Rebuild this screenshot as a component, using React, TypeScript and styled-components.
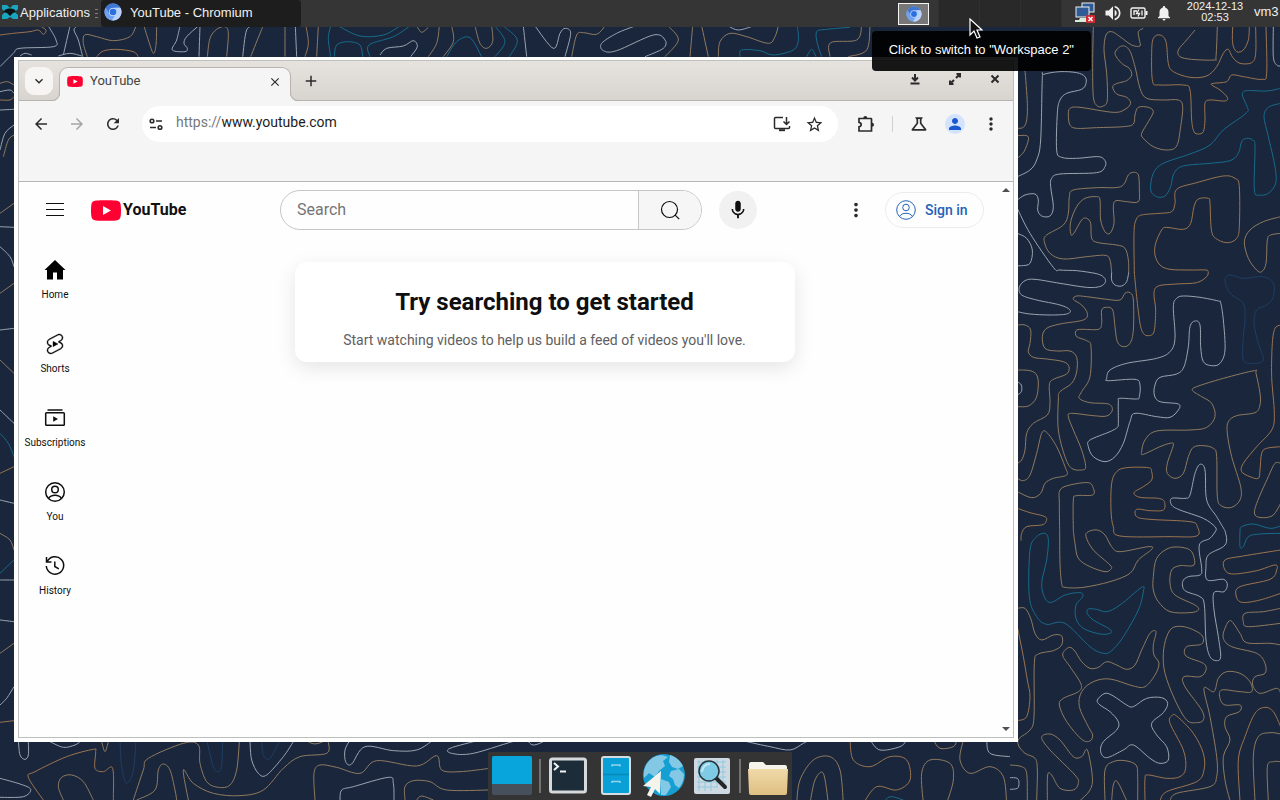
import React from "react";
import styled, { createGlobalStyle } from "styled-components";
import {
  MdAdd, MdArrowBack, MdArrowForward, MdClose, MdExpandMore, MdMic, MdMoreVert,
  MdNotifications, MdOutlineScience, MdPerson, MdRefresh, MdStarBorder, MdVolumeUp,
} from "react-icons/md";

const GlobalStyle = createGlobalStyle`
  *, *::before, *::after { box-sizing: border-box; }
  body { margin: 0; font-family: "Liberation Sans", Arial, sans-serif; background: #1a263b; }
  button, input { font: inherit; color: inherit; border: 0; padding: 0; background: none; }
  button { cursor: default; }
  input { outline: 0; min-width: 0; }
  svg { display: block; flex: none; }
`;

/* ---------- wallpaper ---------- */

type Line = [tone: string, points: string, closed?: boolean];
interface Patch { x: number; y: number; lines: Line[]; }

const tones: Record<string, string> = { w: "#9aa5b1", t: "#8e7a60", o: "#9b7450", b: "#176a8c", d: "#1d3e63" };

const patches: Patch[] = [
  { x: 1010, y: 20, lines: [
    ["t", "250,20 248,130 250,230 262,258 280,258 292,240 290,160 282,90 288,45 305,35 330,50 365,75 390,78 388,60 385,35 400,25"],
    ["t", "315,100 335,78 358,90 375,140 390,205 410,235 460,240 505,240 518,260 512,320 500,378 470,390 430,380 400,355 395,340 415,305 430,275 415,262 385,262 375,285 370,312 340,320 260,323 200,325 180,315 175,285 180,265 210,262 310,277 345,268 362,250 350,232 320,222 308,200 322,190 350,182 365,165 358,145 335,130", true],
    ["o", "737,20 737,100 725,128 690,130 668,112 655,88 640,100 620,140 590,168 540,172 490,155 475,130 468,65 450,45 430,55 425,100 428,185 450,195 520,195 540,210 545,300 552,335 565,342 580,335 585,300 585,250 600,240 645,243 652,232 630,210 605,195 610,190 650,185 665,165 700,170 755,178 770,160 768,20"],
    ["t", "555,30 530,60 505,90 510,110 545,118 612,120 618,110 622,20"],
    ["o", "668,20 668,70 680,95 700,90 715,60 718,20"],
    ["w", "790,20 790,110 800,135 812,138"],
    ["b", "812,205 770,213 710,212 697,225 712,262 708,280 640,330 600,375 540,402 460,430 430,460 422,510 440,530 465,528 482,500 492,460 520,438 600,430 660,422 685,400 695,365 710,355 728,360 735,380 733,510 748,525 775,520 797,490 795,440 775,350 762,290 775,262 812,250"],
    ["w", "22,470 60,450 80,420 92,360 97,175 102,163 150,155 200,158 225,170 228,190 215,208 170,220 150,240 142,280 140,390 155,412 200,415 265,410 285,422 285,440 260,458 150,462 125,475 122,500 130,560 120,588 95,588 83,570 85,540 75,522 45,525 22,540"],
    ["t", "45,150 52,250 50,300 40,322 22,325"],
    ["t", "22,347 50,347 55,360 42,395 22,415"],
    ["t", "356,760 355,720 345,685 320,675 265,668 245,655 242,610 230,595 215,600 190,642 182,640 182,605 200,560 225,535 260,530 270,540 272,600 285,635 300,640 312,610 310,560 318,542 350,545 385,545 388,510 385,465 370,457 355,465 332,500 260,503 190,510 178,530 175,580 160,615 110,645 103,665 120,700 160,717 230,710 285,706 300,720 305,760"],
    ["w", "22,565 60,640 130,742 150,750 200,752 255,760 276,767"],
    ["o", "373,760 372,640 378,600 395,585 450,580 485,575 495,550 500,508 560,488 640,468 675,475 688,500 688,620 680,655 655,668 625,660 605,635 600,550 595,535 565,537 552,560 542,610 520,628 470,622 455,630 437,670 435,705 450,735 480,748 540,750 588,750 595,756"],
    ["t", "812,590 760,605 720,630 703,665 715,715 740,750 755,755 768,730 772,660 782,645 812,640"],
    ["w", "22,640 50,655 67,690 60,730 35,737 22,737"],
  ]},
  { x: 1010, y: 270, lines: [
    ["w", "276,17 286,28 284,40 268,50 230,52 150,40 75,28 45,32 28,52 35,75 80,90 150,105 180,120 170,132 120,135 60,132 22,125"],
    ["w", "305,8 305,30 315,45 335,48 350,35 356,8"],
    ["o", "373,8 380,80 390,160 400,190 415,197 432,185 437,120 432,70 445,48 500,42 560,38 590,20 595,6"],
    ["t", "22,165 45,165 62,180 60,220 55,245 70,262 110,267 160,275 177,290 170,312 130,328 118,345 120,400 112,435 70,460 50,490 45,540 35,570 22,580"],
    ["t", "200,78 190,88 215,105 232,130 220,150 150,162 110,175 97,200 105,235 140,243 180,243 200,262 200,305 185,340 150,365 145,390 145,480 165,560 185,595 215,600 227,590 215,540 190,480 175,440 185,430 250,437 290,438 307,420 295,402 240,398 208,385 215,365 240,320 243,230 230,212 200,200 198,182 215,178 265,178 275,160 275,120 290,112 308,120 315,170 322,215 340,230 360,220 370,180 370,90 360,68 345,70 330,90 290,88 230,80", true],
    ["w", "490,110 500,85 520,78 570,82 625,93 632,98 640,150 645,240 630,280 605,287 580,275 572,230 570,165 555,153 540,170 535,230 522,290 500,312 450,322 435,345 433,375 450,395 505,402 505,420 480,442 440,440 375,430 360,455 340,520 315,560 285,575 250,560 235,530 240,510 300,485 322,472 325,460 325,395 330,385 380,387 388,380 390,345 375,328 295,332 290,325 300,300 350,280 440,265 480,245 495,205", true],
    ["t", "733,302 738,310 750,370 750,405 735,428 680,437 655,455 652,490 665,560 692,650 690,690 665,712 635,708 622,680 620,560 610,535 580,527 550,532 535,560 520,610 495,625 472,610 472,580 490,525 480,520 450,530 400,553 395,545 405,510 440,483 540,480 590,472 615,440 605,400 575,380 548,362 560,350 640,325", true],
    ["d", "645,30 660,15 700,25 760,20 790,40 790,80 770,105 740,120 732,160 745,220 760,270 730,280 700,270 700,200 705,150 700,100 660,70", true],
    ["o", "812,165 795,175 787,220 785,320 793,430 785,480 740,530 700,580 695,605 720,620 745,625 750,600 755,550 770,535 812,530"],
    ["t", "812,580 795,580 775,620 740,700 735,735 760,743 790,735 812,700"],
    ["t", "22,625 40,632 60,615 80,550 95,490 110,487 140,530 165,590 170,615 130,625 105,640 92,670 65,683 22,665"],
    ["o", "305,640 320,605 350,593 415,593 425,605 425,630 400,650 372,668 390,682 445,685 463,695 460,720 420,722 380,718 380,740 420,748 540,755 562,770 560,798 480,800 330,798 310,770 303,720", true],
    ["w", "645,782 620,740 590,690 585,600 570,583 555,610 540,675 525,685 485,685 485,705 510,720 580,745 615,770 618,782"],
    ["t", "149,782 148,700 150,660 180,645 235,638 250,655 248,675 200,677 190,690 190,782"],
    ["t", "22,300 60,302 80,315 85,345 78,385 55,408 22,410"],
    ["w", "22,335 34,345 34,365 22,375"],
    ["o", "22,715 60,728 105,740 108,755 95,765 50,770 35,790 33,812"],
    ["b", "690,782 695,770 730,762 780,775 812,768"],
  ]},
  { x: 1010, y: 530, lines: [
    ["b", "60,60 80,20 105,10 115,30 110,90 95,160 105,205 125,217 165,195 210,188 218,200 198,225 198,265 220,295 270,312 300,310 300,298 250,270 232,250 235,237 260,238 290,245 330,225 395,172 400,185 385,240 340,320 305,362 280,370 240,350 165,280 110,283 80,260 58,200", true],
    ["t", "149,2 150,100 155,160 165,172 220,172 300,155 360,130 385,90 425,58 415,50 330,65 305,50 285,15 262,0 235,5 228,20 250,60 300,105 302,118 285,125 240,110 205,85 195,40 190,2"],
    ["t", "430,140 440,85 475,55 515,52 545,65 552,105 510,107 485,120 480,160 495,195 555,225 565,240 540,248 480,245 445,215 430,180", true],
    ["w", "645,2 650,30 640,50 595,75 588,110 592,150 640,148 652,165 642,185 612,188 612,240 625,320 632,380 620,392 600,380 588,330 583,225 570,200 525,182 518,155 535,140 570,135 575,115 568,45 600,25 618,2"],
    ["b", "690,2 690,50 700,50 715,20 750,12 812,10"],
    ["o", "812,60 700,78 645,90 645,120 670,132 740,122 795,105 800,120 780,148 690,170 678,195 695,217 750,210 812,190"],
    ["t", "812,235 760,245 705,250 700,275 715,290 812,280"],
    ["t", "812,345 780,340 710,338 690,310 662,272 645,295 640,325 665,350 740,370 765,400 765,430 735,440 728,465 750,490 800,475 812,490"],
    ["t", "470,320 490,292 530,292 575,315 575,342 530,350 528,378 580,400 588,420 570,440 522,440 525,470 575,540 580,570 560,578 530,570 495,510 465,430 460,370", true],
    ["t", "158,375 175,353 192,360 215,395 240,415 265,412 290,395 320,405 350,418 375,405 395,360 420,310 438,305 430,345 432,375 447,400 435,435 405,470 370,468 300,447 250,455 215,485 208,530 235,590 248,615 240,633 215,628 170,575 148,525 160,505 205,485 213,462 180,410", true],
    ["w", "262,510 285,490 310,498 350,525 370,530 410,505 455,503 473,520 460,548 425,580 440,615 470,650 475,690 450,700 420,685 370,645 340,660 290,683 272,665 280,635 320,600 325,575 300,545 270,525", true],
    ["t", "22,235 45,235 62,265 75,310 95,330 130,315 155,318 155,345 130,362 85,372 73,400 72,560 60,600 28,625 25,645 45,670 75,685 82,720 80,812"],
    ["o", "22,290 40,380 52,450 60,500 50,560 22,572"],
    ["t", "210,812 240,780 247,740 232,660 215,680 190,680 150,630 120,612 95,622 120,660 195,735 205,760 190,780 150,775 125,735 113,735 112,812"],
    ["t", "285,812 285,720 310,695 345,692 378,705 383,740 383,812"],
    ["t", "305,812 310,765 322,755 350,812"],
    ["o", "405,812 405,745 415,735 470,745 510,740 527,715 520,660 480,580 485,558 500,558 550,610 580,670 582,720 560,755 470,785 450,812"],
    ["t", "660,812 645,750 640,680 660,630 645,590 650,560 688,545 690,525 645,525 630,505 635,480 690,485 725,485 720,455 690,430 650,425 625,445 612,485 582,475 600,560 620,680 620,740 600,770 500,790 480,812"],
    ["o", "690,812 685,690 705,620 735,550 765,532 790,545 812,590"],
    ["t", "735,812 730,680 745,620 780,608 812,612"],
    ["t", "775,812 772,710 790,695 812,695"],
    ["t", "0,705 35,710 50,730 52,812"],
    ["w", "0,743 22,745 27,760 22,775 0,778"],
  ]},
  { x: 0, y: 690, lines: [
    ["w", "55,150 60,195 75,208 85,195 85,155"],
    ["w", "150,155 190,172 225,165 240,155"],
    ["o", "130,330 85,262 105,245 200,200 280,178 287,185 285,235 310,245 338,235 340,330"],
    ["t", "190,330 175,290 185,262 215,255 250,275 280,330"],
    ["w", "0,265 60,282 92,298 70,320 0,322"],
    ["t", "400,330 430,240 445,205 550,160 595,165 600,220 620,275 655,292 690,285 710,240 718,155"],
    ["d", "360,150 365,230 380,280 400,240 408,150"],
    ["d", "620,150 640,230 655,245 665,225 668,150"],
    ["d", "785,150 790,195 810,205 840,150"],
    ["t", "410,330 465,300 475,240 490,222 510,240 525,300 530,330"],
    ["t", "565,330 550,240 580,280 640,310 720,317 790,300 850,235 900,200 980,190 985,155"],
    ["w", "750,155 755,210 775,250 800,255 850,200 880,155"],
    ["t", "915,150 945,162 980,150"],
    ["w", "1050,150 1035,180 1037,215 1055,222 1095,170 1180,182 1250,180 1300,150"],
    ["t", "945,330 942,250 960,225 1010,232 1080,250 1130,212 1250,228 1310,197 1325,240 1380,245 1470,235"],
    ["w", "1020,330 1025,300 1060,290 1165,262 1180,280 1182,330"],
    ["t", "1215,330 1215,290 1240,272 1290,275 1340,300 1470,300"],
    ["t", "1250,330 1265,318 1300,330"],
    ["w", "1440,150 1350,175 1355,190 1420,190 1560,150 1600,165 1640,150"],
    ["t", "305,155 315,185 325,155"],
    ["w", "0,45 20,25 42,-10"],
    ["o", "0,97 42,92"],
  ]},
  { x: 0, y: 0, lines: [
    ["o", "0,105 40,100 90,95 115,90 130,103 138,90 115,75"],
    ["w", "0,200 40,160 60,145 160,140 168,120 145,78"],
    ["w", "190,165 210,78"], ["w", "232,78 222,90 235,120 248,170"],
    ["t", "262,170 250,130 255,104 290,110 340,122 390,110 408,78"],
    ["o", "290,170 310,153 350,148 400,155 415,170"],
    ["t", "432,78 445,120 460,160 468,135 470,78"],
    ["w", "540,78 530,120 517,150 555,155 562,145 552,130 560,110 595,78"],
    ["w", "597,170 600,78"], ["t", "622,170 630,115 650,88 675,80 685,100 680,170"],
    ["w", "728,170 740,90 765,78"], ["t", "752,170 785,88 790,78"],
    ["t", "855,170 855,78"], ["w", "890,170 886,78"], ["o", "915,170 925,130 918,78"], ["t", "955,78 950,170"],
    ["b", "992,78 985,115 992,170"], ["b", "1003,170 1010,135 1045,125 1080,135 1088,170"],
    ["b", "1015,78 1080,108 1150,105 1200,78"], ["b", "1110,170 1107,135 1180,110 1230,78"],
    ["t", "0,250 22,245 42,255"], ["w", "0,275 30,270 42,280"], ["o", "0,300 30,300 42,290"], ["w", "0,330 42,328"],
    ["w", "0,450 15,400 42,375"], ["t", "10,470 25,420 42,405"], ["t", "0,640 42,610"], ["w", "0,680 42,682"],
    ["w", "0,740 30,770 42,800"], ["t", "0,880 42,850"], ["w", "0,990 42,985"], ["t", "0,1080 42,1120"],
    ["w", "0,1230 42,1270"], ["b", "0,1300 25,1330 42,1370"], ["o", "0,1420 42,1400"], ["w", "0,1500 42,1510"],
    ["t", "0,1600 30,1620 42,1650"], ["b", "0,1720 42,1680"], ["w", "0,1740 42,1740"], ["w", "0,1860 42,1865"],
    ["t", "0,1960 42,1930"],
    ["w", "60,168 75,160 95,165"], ["w", "175,168 210,160 245,168"],
  ]},
  { x: 380, y: 0, lines: [
    ["w", "0,165 20,145 70,138 100,122 112,140 92,170"], ["t", "110,78 125,97 145,82"],
    ["t", "145,170 170,130 178,78"], ["t", "190,170 220,125 215,78"],
    ["b", "200,170 230,125 270,113 305,170"], ["b", "345,78 375,125 345,170"], ["b", "370,78 412,120 388,170"],
    ["t", "285,78 300,130 320,145 338,125 335,78"], ["w", "430,78 440,170"],
    ["w", "465,78 520,145 540,100 555,85 572,100 555,170"], ["t", "575,170 590,105 610,98 650,103 675,78"],
    ["w", "765,78 710,100 665,130 670,152 710,152 820,105 855,120 850,145 795,170"],
    ["t", "865,78 895,120 855,170"], ["t", "938,78 930,170"], ["t", "965,78 985,170"],
    ["t", "1015,170 1020,125 1050,100 1100,110 1165,130 1185,110 1195,78"], ["w", "1045,78 1075,90 1120,78"],
    ["b", "1080,170 1085,150 1140,152 1180,165 1240,150 1255,120 1252,78"],
    ["b", "1325,170 1312,130 1310,95 1340,88 1410,82"], ["b", "1280,170 1295,148 1308,170"],
    ["t", "1350,170 1352,128 1430,120 1445,78"], ["t", "1405,170 1460,150 1470,78"],
  ]},
  { x: 790, y: 740, lines: [
    ["w", "-130,5 -60,20 0,30 40,10 60,0"], ["t", "20,190 30,120 70,60 120,50 150,90 160,190"],
    ["t", "60,190 75,120 100,100 115,190"], ["o", "180,0 190,60 240,80 300,50 350,60 360,120 320,150 260,140 220,190"],
    ["w", "240,0 270,30 330,20 350,0"], ["t", "400,190 395,100 420,60 480,70 490,120 470,190"],
    ["t", "520,0 510,60 540,100 600,80 640,110 650,190"], ["t", "430,0 450,25 490,20 500,0"],
    ["w", "590,0 600,40 660,50"], ["b", "280,190 300,170 340,180"],
  ]},
];

function smoothPath(points: string, closed = false) {
  const p = points.split(" ").map((pair) => pair.split(",").map(Number));
  const n = p.length;
  const at = (i: number) => (closed ? p[(i + n) % n] : p[Math.max(0, Math.min(n - 1, i))]);
  let d = `M${p[0]}`;
  for (let i = 0; i < (closed ? n : n - 1); i++) {
    const [a, b, c, e] = [at(i - 1), at(i), at(i + 1), at(i + 2)];
    d += `C${b[0] + (c[0] - a[0]) / 6},${b[1] + (c[1] - a[1]) / 6} ${c[0] - (e[0] - b[0]) / 6},${c[1] - (e[1] - b[1]) / 6} ${c[0]},${c[1]}`;
  }
  return closed ? d + "Z" : d;
}

const WallpaperSvg = styled.svg`
  position: absolute;
  inset: 0;
  z-index: -1;
  width: 100%;
  height: 100%;
  background: #1a263b;
`;

const Wallpaper = () => (
  <WallpaperSvg viewBox="0 0 1280 800" preserveAspectRatio="xMidYMid slice" aria-hidden>
    {patches.map((patch, k) => (
      <g key={k} transform={`translate(${patch.x} ${patch.y}) scale(.33333)`} fill="none" strokeWidth="3">
        {patch.lines.map(([tone, pts, closed], i) => <path key={i} d={smoothPath(pts, closed)} stroke={tones[tone]} />)}
      </g>
    ))}
  </WallpaperSvg>
);

/* ---------- desktop and top panel ---------- */

const Desktop = styled.div`
  position: relative;
  z-index: 0;
  display: flex;
  flex-direction: column;
  min-height: 100vh;
  overflow: hidden;
`;

const Panel = styled.header`
  position: relative;
  z-index: 2;
  display: flex;
  height: 27px;
  background: #353535;
  color: #f0f0f0;
  font-size: 13px;
`;

const MenuButton = styled.button`
  display: flex;
  align-items: center;
  gap: 2px;
  width: 92px;
  padding: 0 0 3px 2px;
`;

const Handle = styled.span`
  width: 3px;
  height: 9px;
  margin: 9px 3px 0 3px;
  border-top: 1px solid #85827a;
  border-bottom: 1px solid #85827a;
  background: linear-gradient(#353535 3px, #85827a 3px 4px, #353535 4px);
`;

const Task = styled.button`
  display: flex;
  align-items: center;
  gap: 8px;
  width: 200px;
  padding: 0 0 3px 3px;
  border-radius: 3px;
  background: #1d1d1d;
  text-align: left;
`;

const Pager = styled.div`
  display: flex;
  margin-left: auto;
  background: #2a2a2a;
`;

const Workspace = styled.button<{ $active?: boolean }>`
  display: flex;
  align-items: center;
  width: 41px;
  border-right: 1px solid #303030;
  background: ${(p) => (p.$active ? "#353535" : "#292929")};
`;

const MiniWindow = styled.span`
  display: grid;
  place-items: center;
  width: 31px;
  height: 22px;
  border: 1px solid #f4f4f4;
  background: #777;
`;

const Tray = styled.div`
  display: flex;
  align-items: center;
  gap: 7px;
  padding: 0 11px 1px 12px;
`;

const Clock = styled.time`
  width: 62px;
  padding-top: 1px;
  font-size: 11px;
  line-height: 11px;
  text-align: center;
`;

const Host = styled.span`
  width: 34px;
  padding: 4px 0 0 8px;
  line-height: 16px;
`;

const Tooltip = styled.div`
  position: absolute;
  top: 31px;
  right: 189px;
  padding: 11px 17px 13px;
  border-radius: 4px;
  background: rgba(0, 0, 0, 0.9);
  color: #fff;
  line-height: 16px;
  white-space: nowrap;
`;

const Pointer = styled.svg`
  position: absolute;
  top: 18px;
  right: 297px;
`;

const ChromiumIcon = ({ size = 17 }: { size?: number }) => (
  <svg width={size} height={size} viewBox="0 0 18 18">
    <circle cx="9" cy="9" r="8.5" fill="#8fb8f6" />
    <path d="M1.6 4.7A8.5 8.5 0 0 1 16.4 4.8H9a4.2 4.2 0 0 0-4 5.4z" fill="#3f76d4" />
    <path d="M1.6 4.7 5.3 11A4.2 4.2 0 0 0 10 13l-2 4.4A8.5 8.5 0 0 1 1.6 4.7z" fill="#6ea1f0" />
    <path d="M16.4 4.8A8.5 8.5 0 0 1 8 17.4l4.1-6.2a4.2 4.2 0 0 0-1-6.4z" fill="#b9d3fa" />
    <circle cx="9" cy="9" r="3.900" fill="#cfe1fd" />
    <circle cx="9" cy="9" r="3.300" fill="#2a6fdc" />
  </svg>
);

const MouseLogo = () => (
  <svg width="16" height="16" viewBox="0 0 16 16">
    <path d="M0 1h5l3 3 3-3h5v4l-3 3 3 3v4h-5l-3-2-3 2H0v-4l3-3-3-3z" fill="#19a5bd" />
    <path d="M3 6c2-2 8-2 10 0l1 2-3 1-3 3-3-3-4-1z" fill="#0c1418" />
  </svg>
);

const NetworkIcon = () => (
  <svg width="22" height="22" viewBox="0 0 22 22">
    <rect x="8" y="1" width="12" height="9" fill="#2e5a96" stroke="#eee" />
    <rect x="2" y="5" width="13" height="10" fill="#2e5a96" stroke="#eee" />
    <path d="M6 16h6l1 2h2v2H1v-2h4z" fill="#d7ecdf" />
    <rect x="12" y="13" width="9" height="8" rx="1" fill="#cf2b33" />
    <path d="m14.500 15 4 4m0-4-4 4" stroke="#fff" strokeWidth="1.500" />
  </svg>
);

const BatteryIcon = () => (
  <svg width="18" height="14" viewBox="0 0 18 14" fill="none" stroke="#f2f2f2">
    <rect x="1" y="2" width="14" height="10" rx="1.500" strokeWidth="1.400" />
    <path d="M16.500 5v4" strokeWidth="2" />
    <path d="M4 9V5h3M9 3.500 6.500 7.500h3L8 10.500M12 4.500v5" strokeWidth="1.300" />
  </svg>
);

const TopPanel = () => (
  <Panel>
    <MenuButton><MouseLogo />Applications</MenuButton>
    <Handle />
    <Task><ChromiumIcon size={18} />YouTube - Chromium</Task>
    <Pager>
      <Workspace $active aria-label="Workspace 1"><MiniWindow><ChromiumIcon size={16} /></MiniWindow></Workspace>
      <Workspace aria-label="Workspace 2" />
      <Workspace aria-label="Workspace 3" />
      <Workspace aria-label="Workspace 4" />
    </Pager>
    <Tray>
      <NetworkIcon /><MdVolumeUp size={20} /><BatteryIcon /><MdNotifications size={18} />
    </Tray>
    <Clock>2024-12-13<br />02:53</Clock>
    <Host>vm3</Host>
    <Tooltip role="tooltip">Click to switch to "Workspace 2"</Tooltip>
    <Pointer width="14" height="22" viewBox="0 0 14 22">
      <path d="M1 1v16l4-4 3 7 3-1-3-7h5z" fill="#111" stroke="#fff" strokeWidth="1.200" />
    </Pointer>
  </Panel>
);

/* ---------- browser window ---------- */

const Window = styled.main`
  display: flex;
  flex: 1;
  flex-direction: column;
  margin: 30px 262px 10px 14px;
  padding: 3px 4px 4px;
  background: #fff;
`;

const Frame = styled.div`
  display: flex;
  flex: 1;
  flex-direction: column;
  border: 1px solid #bdbfbd;
  background: #fefefe;
`;

const TabStrip = styled.div`
  display: flex;
  align-items: flex-end;
  height: 40px;
  border-bottom: 1px solid #b8b3ae;
  background: linear-gradient(#e6e3df, #d8d4d0);
  color: #2b2b2b;
`;

const TabSearch = styled.button`
  display: grid;
  place-items: center;
  width: 28px;
  height: 28px;
  margin: 0 6px 5px;
  border-radius: 9px;
  background: #f7f5f4;
`;

const Tab = styled.div`
  position: relative;
  display: flex;
  align-items: center;
  gap: 7px;
  width: 232px;
  height: 34px;
  margin-bottom: -1px;
  padding: 0 8px 6px 7px;
  border: 1px solid #b8b3ae;
  border-bottom: 0;
  border-radius: 9px 9px 0 0;
  background: #f5f5f5;
  color: #444;
  font-family: Roboto, "Liberation Sans", sans-serif;
  font-size: 13px;

  &::before,
  &::after {
    content: "";
    position: absolute;
    bottom: 0;
    width: 8px;
    height: 8px;
    border-bottom: 1px solid #b8b3ae;
  }
  &::before {
    right: 100%;
    border-right: 1px solid #b8b3ae;
    border-bottom-right-radius: 8px;
    box-shadow: 2px 2px 0 #f5f5f5;
  }
  &::after {
    left: 100%;
    border-left: 1px solid #b8b3ae;
    border-bottom-left-radius: 8px;
    box-shadow: -2px 2px 0 #f5f5f5;
  }
`;

const TabTitle = styled.span`
  flex: 1;
  padding-bottom: 2px;
`;

const IconButton = styled.button<{ $size?: number; $muted?: boolean }>`
  display: grid;
  place-items: center;
  flex: none;
  width: ${(p) => p.$size ?? 36}px;
  height: ${(p) => p.$size ?? 36}px;
  color: ${(p) => (p.$muted ? "#a5a5a5" : "#2b2b2b")};
`;

const NewTab = styled(IconButton)`
  margin: 0 auto 5px 6px;
`;

const WindowControls = styled.div`
  display: flex;
  gap: 12px;
  padding: 0 4px 7px 0;
`;

const Toolbar = styled.div`
  display: flex;
  align-items: center;
  height: 81px;
  padding: 0 4px 34px;
  border-bottom: 1px solid #b4b8b4;
  background: #f5f5f5;
`;

const AddressBar = styled.div`
  display: flex;
  align-items: center;
  flex: 1;
  height: 36px;
  margin: 0 10px 0 11px;
  padding: 0 8px 0 2px;
  border-radius: 18px;
  background: #fff;
  color: #1c1c1c;
  font-family: Roboto, "Liberation Sans", sans-serif;
  font-size: 14px;
`;

const Scheme = styled.label`
  padding: 0 0 4px 8px;
  color: #777;
`;

const AddressInput = styled.input`
  flex: 1;
  height: 32px;
  padding-bottom: 4px;
`;

const Divider = styled.span`
  width: 1px;
  height: 16px;
  margin: 0 8px;
  background: #cfcfcf;
`;

const Avatar = styled.span`
  display: grid;
  place-items: center;
  width: 20px;
  height: 20px;
  border-radius: 50%;
  background: #d3e3fd;
  color: #1b57d0;
`;

const stroke = { fill: "none", stroke: "currentColor", strokeWidth: 2 } as const;

const TuneIcon = () => (
  <svg width="16" height="16" viewBox="0 0 16 16" {...stroke} strokeWidth="1.600">
    <circle cx="4" cy="5" r="1.800" /><path d="M8 5h6M2 11.500h6" /><circle cx="12" cy="11.500" r="1.800" />
  </svg>
);

const InstallIcon = () => (
  <svg width="18" height="18" viewBox="0 0 18 18" {...stroke} strokeWidth="1.500">
    <path d="M10 2.500H2.500q-1 0-1 1v9q0 1 1 1h13q1 0 1-1V11M13.500 2v7M10.500 6.500l3 3 3-3" /><path d="M6 15.200h6" strokeWidth="2" />
  </svg>
);

const PuzzleIcon = () => (
  <svg width="18" height="18" viewBox="0 0 18 18" {...stroke} strokeWidth="1.700">
    <path d="M2 3.500h12q.5 0 .5.5v12H2v-4.200q2.200-.4 2.200-2.200T2 7.400z" />
    <path d="M6.300 3a2 2 0 0 1 4 0zM15 7.700a2 2 0 0 1 0 4z" fill="currentColor" stroke="none" />
  </svg>
);

const MinimizeIcon = () => (
  <svg width="12" height="12" viewBox="0 0 12 12" {...stroke}><path d="M6 1v6M3 4.500l3 3 3-3M1.500 10.500h9" /></svg>
);

const MaximizeIcon = () => (
  <svg width="14" height="14" viewBox="0 0 14 14" {...stroke}><path d="M8.500 2H12v3.500M12 2 8 6M5.500 12H2V8.500M2 12l4-4" /></svg>
);

const PlayBadge = ({ width, height }: { width: number; height: number }) => (
  <svg width={width} height={height} viewBox="0 0 30 21">
    <path d="M5 .6C10 0 20 0 25 .6c3 .4 4.400 1.500 4.700 4.400.4 3.500.4 7.500 0 11-.3 2.900-1.700 4-4.700 4.400-5 .6-15 .6-20 0C2 20 .6 18.900.3 16c-.4-3.500-.4-7.500 0-11C.6 2.100 2 1 5 .6z" fill="#ff0033" />
    <path d="M12 6v9l8-4.500z" fill="#fff" />
  </svg>
);

/* ---------- page ---------- */

const Page = styled.div`
  display: flex;
  flex: 1;
  color: #0f0f0f;
  font-family: Roboto, "Liberation Sans", sans-serif;
`;

const PageBody = styled.div`
  display: flex;
  flex: 1;
  flex-direction: column;
`;

const ScrollTrack = styled.div`
  display: flex;
  flex-direction: column;
  align-items: center;
  justify-content: space-between;
  width: 15px;
  padding: 6px 0;
`;

const Masthead = styled.div`
  display: flex;
  align-items: center;
  height: 56px;
  padding: 0 16px;
`;

const Brand = styled.div`
  display: flex;
  align-items: center;
  gap: 16px;
  flex: none;
  width: 245px;
`;

const LogoLink = styled.a`
  display: flex;
  align-items: center;
  gap: 2px;
  color: #111;
  font-size: 16px;
  font-weight: 700;
  line-height: 24px;
  text-decoration: none;
`;

const SearchForm = styled.form`
  display: flex;
  flex: 1;
  height: 40px;
  border: 1px solid #c6c6c6;
  border-radius: 20px;
  overflow: hidden;
`;

const SearchInput = styled.input`
  flex: 1;
  padding: 0 16px 2px;
  font-size: 16px;
  &::placeholder { color: #757575; opacity: 1; }
`;

const SearchButton = styled.button`
  display: grid;
  place-items: center;
  width: 63px;
  border-left: 1px solid #c6c6c6;
  background: #f6f6f6;
`;

const MicButton = styled(IconButton)`
  margin: 0 79px 0 17px;
  border-radius: 50%;
  background: #f1f1f1;
  color: #0f0f0f;
`;

const SignIn = styled.a`
  display: flex;
  align-items: center;
  gap: 7px;
  flex: none;
  height: 36px;
  margin-left: 9px;
  padding: 0 15px 0 8px;
  border: 1px solid #ececec;
  border-radius: 18px;
  color: #2163b8;
  font-size: 14px;
  font-weight: 500;
  text-decoration: none;
`;

const Account = styled.div`
  display: flex;
  align-items: center;
  flex: none;
  width: 146px;
`;

const Columns = styled.div`
  display: flex;
  flex: 1;
`;

const Guide = styled.nav`
  display: flex;
  flex-direction: column;
  width: 72px;
  padding-top: 4px;
`;

const GuideLink = styled.a`
  display: flex;
  flex-direction: column;
  align-items: center;
  gap: 6px;
  height: 74px;
  padding-top: 16px;
  color: inherit;
  font-size: 10px;
  line-height: 14px;
  text-decoration: none;
`;

const Feed = styled.section`
  flex: 1;
  padding: 24px 16px;
`;

const Card = styled.div`
  max-width: 500px;
  margin: 0 auto;
  padding: 24px 24px 12px;
  border-radius: 12px;
  background: #fff;
  box-shadow: 0 6px 20px rgba(0, 0, 0, 0.1);
  text-align: center;
`;

const CardTitle = styled.h1`
  margin: 0 0 12px;
  font-size: 24px;
  font-weight: 700;
  line-height: 32px;
`;

const CardText = styled.p`
  margin: 0;
  color: #606060;
  font-size: 14px;
  line-height: 20px;
`;

const AccountGlyph = ({ width = 1.5 }: { width?: number }) => (
  <svg width="24" height="24" viewBox="0 0 24 24" {...stroke} strokeWidth={width}>
    <circle cx="12" cy="12" r="9.300" /><circle cx="12" cy="9.500" r="3.300" /><path d="M5.500 18.500C7 16 9.300 15.300 12 15.300s5 .7 6.500 3.200" />
  </svg>
);

const HomeGlyph = () => (
  <svg width="24" height="24" viewBox="0 0 24 24"><path d="M10 21.500v-7h4v7h6V12h2.500L12 2 1.500 12H4v9.500z" /></svg>
);

const ShortsGlyph = () => (
  <svg width="24" height="24" viewBox="0 0 24 24">
    <path stroke="currentColor" strokeWidth=".4" d="M10 14.650v-5.300L15 12l-5 2.650zm7.770-4.330-1.200-.5L18 9.060c1.840-.96 2.530-3.230 1.560-5.060s-3.240-2.530-5.070-1.560L6 6.940c-1.290.68-2.070 2.040-2 3.490.07 1.420.93 2.670 2.220 3.250.03.01 1.200.5 1.200.5L6 14.930c-1.830.97-2.530 3.240-1.560 5.070.97 1.830 3.240 2.530 5.070 1.560l8.500-4.500c1.290-.68 2.060-2.040 1.990-3.490-.07-1.420-.94-2.680-2.230-3.250zm-.23 5.860-8.500 4.500c-1.340.71-3.010.2-3.720-1.140-.71-1.340-.2-3.010 1.140-3.720l2.040-1.080v-1.210l-.69-.28-1.110-.46c-.99-.41-1.650-1.350-1.700-2.410-.05-1.060.52-2.060 1.460-2.560l8.500-4.500c1.340-.71 3.010-.2 3.720 1.140.71 1.340.2 3.010-1.140 3.720L15.500 9.260v1.210l1.800.74c.99.41 1.650 1.350 1.700 2.410.05 1.060-.52 2.060-1.460 2.560z" />
  </svg>
);

const SubscriptionsGlyph = () => (
  <svg width="24" height="24" viewBox="0 0 24 24" {...stroke} strokeWidth="1.500">
    <path d="M4.500 4h15" /><rect x="2.700" y="6.800" width="18.600" height="12.500" rx=".8" />
    <path d="M10.200 10.200v5.600L15 13z" fill="currentColor" stroke="none" />
  </svg>
);

const HistoryGlyph = () => (
  <svg width="24" height="24" viewBox="0 0 24 24" {...stroke} strokeWidth="1.500">
    <path d="M4.200 7.500A8.700 8.700 0 1 1 3.300 12M3.500 3v5h5M11.800 7.500v5l4 2.300" />
  </svg>
);

const guide = [
  { label: "Home", Glyph: HomeGlyph },
  { label: "Shorts", Glyph: ShortsGlyph },
  { label: "Subscriptions", Glyph: SubscriptionsGlyph },
  { label: "You", Glyph: AccountGlyph },
  { label: "History", Glyph: HistoryGlyph },
];

const Browser = () => (
  <Window>
    <Frame>
      <TabStrip>
        <TabSearch aria-label="Search tabs"><MdExpandMore size={16} /></TabSearch>
        <Tab>
          <PlayBadge width={16} height={11} />
          <TabTitle>YouTube</TabTitle>
          <IconButton $size={14} aria-label="Close tab"><MdClose size={14} /></IconButton>
        </Tab>
        <NewTab $size={28} aria-label="New tab"><MdAdd size={18} /></NewTab>
        <WindowControls>
          <IconButton $size={28} aria-label="Minimize"><MinimizeIcon /></IconButton>
          <IconButton $size={28} aria-label="Maximize"><MaximizeIcon /></IconButton>
          <IconButton $size={28} aria-label="Close">
            <svg width="10" height="10" viewBox="0 0 10 10" {...stroke}><path d="m1.500 1.500 7 7m0-7-7 7" /></svg>
          </IconButton>
        </WindowControls>
      </TabStrip>
      <Toolbar>
        <IconButton aria-label="Back"><MdArrowBack size={18} /></IconButton>
        <IconButton $muted aria-label="Forward"><MdArrowForward size={18} /></IconButton>
        <IconButton aria-label="Reload"><MdRefresh size={18} /></IconButton>
        <AddressBar>
          <IconButton $size={24} aria-label="Site information"><TuneIcon /></IconButton>
          <Scheme htmlFor="address">https://</Scheme>
          <AddressInput id="address" defaultValue="www.youtube.com" />
          <IconButton $size={32} aria-label="Install"><InstallIcon /></IconButton>
          <IconButton $size={32} aria-label="Bookmark"><MdStarBorder size={19} /></IconButton>
        </AddressBar>
        <IconButton aria-label="Extensions"><PuzzleIcon /></IconButton>
        <Divider />
        <IconButton aria-label="Experiments"><MdOutlineScience size={20} /></IconButton>
        <IconButton aria-label="Profile"><Avatar><MdPerson size={18} /></Avatar></IconButton>
        <IconButton aria-label="Menu"><MdMoreVert size={20} /></IconButton>
      </Toolbar>
      <Page>
        <PageBody>
          <Masthead>
            <Brand>
              <IconButton $size={40} aria-label="Guide">
                <svg width="24" height="24" viewBox="0 0 24 24"><path d="M21 6H3V5h18v1zm0 6H3v-1h18v1zm0 6H3v-1h18v1z" fill="#0f0f0f" /></svg>
              </IconButton>
              <LogoLink href="#"><PlayBadge width={30} height={21} />YouTube</LogoLink>
            </Brand>
            <SearchForm>
              <SearchInput placeholder="Search" aria-label="Search" />
              <SearchButton type="button" aria-label="Submit search">
                <svg width="24" height="24" viewBox="0 0 24 24" {...stroke} strokeWidth="1.200">
                  <circle cx="11.500" cy="11.500" r="8" /><path d="m17.200 17.200 4 4" />
                </svg>
              </SearchButton>
            </SearchForm>
            <MicButton $size={38} aria-label="Search with your voice"><MdMic size={22} /></MicButton>
            <Account>
              <IconButton $size={40} aria-label="Settings"><MdMoreVert size={22} /></IconButton>
              <SignIn href="#"><AccountGlyph width={1} />Sign in</SignIn>
            </Account>
          </Masthead>
          <Columns>
            <Guide>
              {guide.map(({ label, Glyph }) => <GuideLink href="#" key={label}><Glyph />{label}</GuideLink>)}
            </Guide>
            <Feed>
              <Card>
                <CardTitle>Try searching to get started</CardTitle>
                <CardText>Start watching videos to help us build a feed of videos you'll love.</CardText>
              </Card>
            </Feed>
          </Columns>
        </PageBody>
        <ScrollTrack>
          <svg width="8" height="4" viewBox="0 0 8 4"><path d="M0 4 4 0l4 4z" fill="#505050" /></svg>
          <svg width="8" height="4" viewBox="0 0 8 4"><path d="m0 0 4 4 4-4z" fill="#505050" /></svg>
        </ScrollTrack>
      </Page>
    </Frame>
  </Window>
);

/* ---------- dock ---------- */

const DockBar = styled.nav`
  display: flex;
  align-self: center;
  height: 48px;
  background: #343434;
`;

const DockItem = styled.button`
  display: grid;
  place-items: center;
  width: 48px;
`;

const DockRule = styled.span`
  width: 2px;
  margin: 7px 3px;
  background: #757370;
`;

const Dock = () => (
  <DockBar>
    <DockItem aria-label="Show desktop">
      <svg width="44" height="44" viewBox="0 0 44 44">
        <rect x="2" y="2" width="40" height="39" rx="2" fill="#46505c" /><path d="M4 2h36q2 0 2 2v26H2V4q0-2 2-2z" fill="#08a4dc" />
      </svg>
    </DockItem>
    <DockRule />
    <DockItem aria-label="Terminal">
      <svg width="44" height="44" viewBox="0 0 44 44">
        <rect x="4.500" y="5" width="35" height="33" rx="2" fill="#1d2c39" stroke="#d5d9dc" strokeWidth="3" />
        <path d="m8 9 4 3.500L8 16M14 17.500h6" fill="none" stroke="#f1f4f6" strokeWidth="2" />
      </svg>
    </DockItem>
    <DockItem aria-label="Files">
      <svg width="44" height="44" viewBox="0 0 44 44">
        <rect x="8" y="3" width="28" height="37" rx="2" fill="#09a0d8" stroke="#d3dde2" strokeWidth="2" />
        <path d="M9 20.500h26" stroke="#0788b9" strokeWidth="1.500" />
        <path d="M18 12.500V11h8v1.500M18 29v-1.500h8V29" fill="none" stroke="#8fd4ee" strokeWidth="1.500" />
      </svg>
    </DockItem>
    <DockItem aria-label="Web browser">
      <svg width="46" height="46" viewBox="0 0 46 46">
        <circle cx="23" cy="22" r="21" fill="#169fd2" />
        <path d="M5 12q5-9 15-10l7 2-5 4 2 5-6 5-4 6-6-4-5 5q-1-7 2-13zM29 2q9 3 13 11l-5 3-6-2-3-5zM30 18l8-2 5 5q0 8-5 14l-4-3-2-6-4-3zM20 26l8 3 2 5-5 8h-5z" fill="#83c9e5" />
        <path d="m20 18-1 23-5-5-4 8-4-2 4-8-8-1z" fill="#f6f3ed" />
      </svg>
    </DockItem>
    <DockItem aria-label="Application finder">
      <svg width="44" height="44" viewBox="0 0 44 44">
        <rect x="4" y="4" width="36" height="36" rx="2" fill="#cfd9e2" />
        <path d="M7 8h29M7 13h29M7 18h29M7 23h29M7 28h29M7 33h20M9 6v31M15 6v31M21 6v31M27 6v28M33 6v24" stroke="#8ccbe2" />
        <path d="m25 23 10 10" stroke="#252525" strokeWidth="4" strokeLinecap="round" />
        <circle cx="19" cy="17" r="10" fill="#7fcbe6" stroke="#26333b" strokeWidth="1.500" />
        <path d="M12 18q1-8 8-8" stroke="#c0e8f5" strokeWidth="2" fill="none" />
      </svg>
    </DockItem>
    <DockRule />
    <DockItem aria-label="Home folder">
      <svg width="44" height="44" viewBox="0 0 44 44">
        <defs><linearGradient id="folder" x2="0" y2="1"><stop stopColor="#f0d9a8" /><stop offset="1" stopColor="#dfbf83" /></linearGradient></defs>
        <path d="M3 16V10q0-2 2-2h12l3 3h19q2 0 2 2v3z" fill="#f6f3ea" />
        <path d="M2 15h40l-1 24q0 2-2 2H5q-2 0-2-2z" fill="url(#folder)" />
      </svg>
    </DockItem>
  </DockBar>
);

const App: React.FC = () => (
  <>
    <GlobalStyle />
    <Desktop>
      <Wallpaper />
      <TopPanel />
      <Browser />
      <Dock />
    </Desktop>
  </>
);

export default App;
